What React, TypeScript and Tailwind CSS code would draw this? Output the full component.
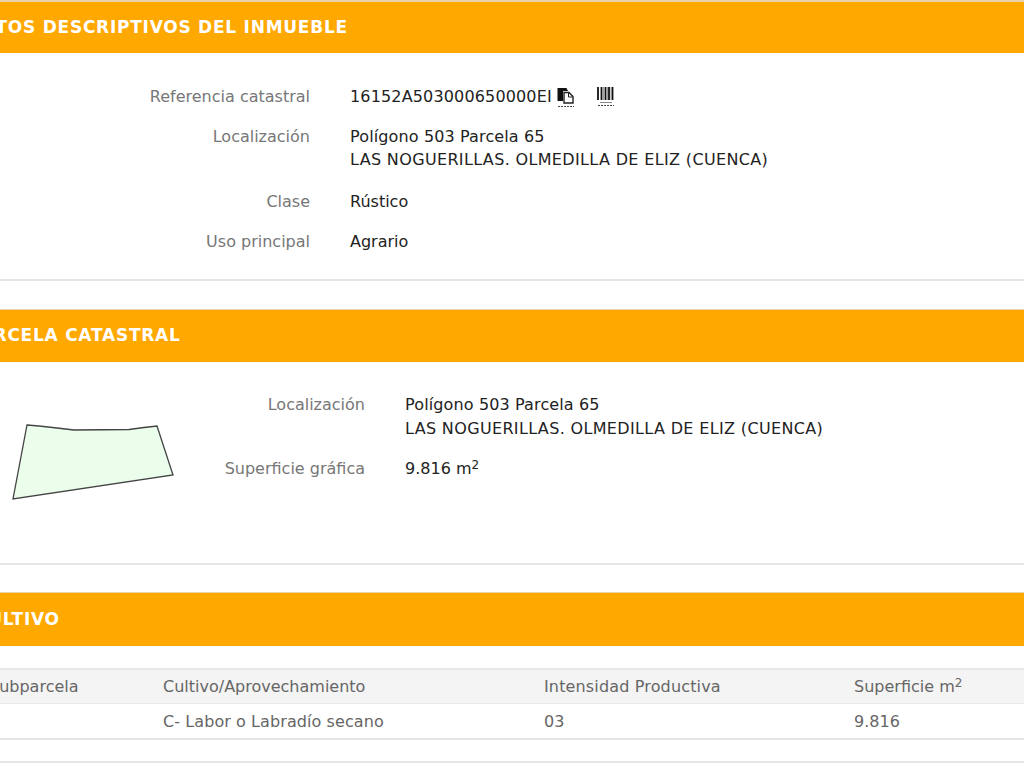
const FONT = "font-['DejaVu_Sans',sans-serif]";
const CAPS = "tracking-[0.35px]";
const MIX = "tracking-[0.13px]";

function Header({ title, inset, className }: { title: string; inset: string; className: string }) {
  return (
    <div className={`${className} border-[#e8d3ad] bg-[#ffa800] flex items-center`}>
      <h2 className={`${inset} text-[17px] font-bold tracking-[0.75px] text-white whitespace-nowrap`}>{title}</h2>
    </div>
  );
}

function Row({ label, children, labelW, className }: { label: string; children: React.ReactNode; labelW: string; className: string }) {
  return (
    <div className={`flex ${className}`}>
      <div className={`${labelW} shrink-0 text-right text-[#777] pr-[40px]`}>{label}</div>
      <div className="text-[#222]">{children}</div>
    </div>
  );
}

function CopyIcon() {
  return (
    <svg width="18" height="22" viewBox="0 0 18 22" className="ml-[5px] mt-[2px]">
      <path d="M0.5 1h9l1.5 3H6v10H0.5z" fill="#111" />
      <path d="M7 5.5h5l4 4V16H7z" fill="#fff" stroke="#222" strokeWidth="1.4" />
      <path d="M11.5 5.5v4.5h4.5" fill="none" stroke="#222" />
      <path d="M1 19.5h16" stroke="#444" strokeWidth="1.2" strokeDasharray="2 1" />
    </svg>
  );
}

function BarcodeIcon() {
  return (
    <svg width="18" height="22" viewBox="0 0 18 22" className="ml-[22px] mt-[1px]">
      <path d="M1 1v13M4.5 1v13M8.5 1v13M12 1v13M15.5 1v13" stroke="#111" strokeWidth="1.8" />
      <path d="M6.5 1v13M10.5 1v13M14 1v13" stroke="#777" strokeWidth="0.7" />
      <path d="M3 16.5h12" stroke="#888" strokeWidth="1" />
      <path d="M1 19.5h16" stroke="#444" strokeWidth="1.2" strokeDasharray="2 1" />
    </svg>
  );
}

export default function App() {
  return (
    <div className="w-[1024px] h-[768px] overflow-hidden bg-white">
      <div className={`${FONT} text-[16px] leading-[23px]`}>
        <section className="h-[281px] border-b-2 border-[#e6e6e6]">
          <Header title="DATOS DESCRIPTIVOS DEL INMUEBLE" inset="-ml-[32px]" className="h-[53px] border-t-2" />
          <div className="pt-[32px]">
            <Row label="Referencia catastral" labelW="w-[350px]" className="h-[40px]">
              <div className="flex items-start">
                <span className="tracking-[0.15px]">16152A503000650000EI</span>
                <CopyIcon />
                <BarcodeIcon />
              </div>
            </Row>
            <Row label="Localización" labelW="w-[350px]" className="h-[65px]">
              <div className={MIX}>Polígono 503 Parcela 65</div>
              <div className={CAPS}>LAS NOGUERILLAS. OLMEDILLA DE ELIZ (CUENCA)</div>
            </Row>
            <Row label="Clase" labelW="w-[350px]" className="h-[40px]">Rústico</Row>
            <Row label="Uso principal" labelW="w-[350px]" className="h-[40px]">Agrario</Row>
          </div>
        </section>

        <section className="mt-[28px] h-[256px] border-b-2 border-[#e6e6e6]">
          <Header title="PARCELA CATASTRAL" inset="-ml-[32px]" className="h-[53px] border-t pb-[1px]" />
          <div className="flex">
            <div className="w-[180px] shrink-0">
              <svg width="180" height="140" viewBox="0 0 180 140" className="block">
                <path d="M27 63 L39 64 L57 66 L74 68 L129 67.5 L144 65.5 L157 64 L173 113 L13 137 Z" fill="#ebfdeb" stroke="#444" strokeWidth="1.3" />
              </svg>
            </div>
            <div className="flex-1 pt-[31px]">
              <Row label="Localización" labelW="w-[225px]" className="h-[64px]">
                <div className={MIX}>Polígono 503 Parcela 65</div>
                <div className={`${CAPS} mt-[1px]`}>LAS NOGUERILLAS. OLMEDILLA DE ELIZ (CUENCA)</div>
              </Row>
              <Row label="Superficie gráfica" labelW="w-[225px]" className="h-[40px]">
                <span>9.816 m<sup className="text-[12px] -top-[5px]">2</sup></span>
              </Row>
            </div>
          </div>
        </section>

        <section className="mt-[27px]">
          <Header title="CULTIVO" inset="-ml-[25px]" className="h-[54px] border-t" />
          <div className="mt-[22px] text-[#666] border-b-2 border-[#e6e6e6]">
            <div className="h-[36px] bg-[#f4f4f4] border-t-2 border-b border-[#e8e8e8] grid grid-cols-[163px_381px_310px_1fr] items-center">
              <div className="-ml-[11px] whitespace-nowrap">Subparcela</div>
              <div>Cultivo/Aprovechamiento</div>
              <div className="tracking-[0.15px]">Intensidad Productiva</div>
              <div>Superficie m<sup className="text-[12px] -top-[5px]">2</sup></div>
            </div>
            <div className="h-[34px] grid grid-cols-[163px_381px_310px_1fr] items-center">
              <div />
              <div className="tracking-[0.08px]">C- Labor o Labradío secano</div>
              <div>03</div>
              <div>9.816</div>
            </div>
          </div>
          <div className="mt-[21px] border-b-2 border-[#e6e6e6]" />
        </section>
      </div>
    </div>
  );
}
